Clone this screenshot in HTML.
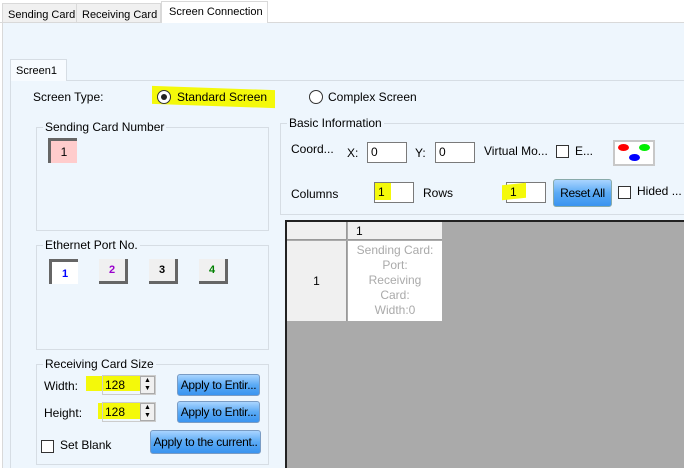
<!DOCTYPE html>
<html><head><meta charset="utf-8"><style>
*{box-sizing:border-box}
body{margin:0;width:684px;height:468px;overflow:hidden;background:#fff;font-family:"Liberation Sans",Arial,sans-serif;font-size:12px;color:#000;position:relative}
.a{position:absolute;white-space:nowrap}
.tab{position:absolute;border:1px solid #d9d9d9;background:#f0f0f0;font-size:11px;padding:5px 0 0 5px;white-space:nowrap;overflow:hidden}
.grp{position:absolute;border:1px solid #d6dde4}
.gl{position:absolute;top:-8px;left:6px;background:#eef6fd;padding:0 2px;font-size:12px;white-space:nowrap}
.in{position:absolute;background:#fff;border:1px solid #7a7a7a;font-size:12px;padding:2px 0 0 3px}
.btn{position:absolute;border:1px solid #7a9cc4;border-radius:3px;background:linear-gradient(#a9d4ff,#5aaaf5 50%,#3a94f0);font-size:12px;text-align:center;padding-top:3px;white-space:nowrap;overflow:hidden;letter-spacing:-0.3px}
.cb{position:absolute;width:13px;height:13px;border:1px solid #333;background:#fff}
.hl{position:absolute;background:#f4f90a}
.port{position:absolute;width:29px;height:25px;background:#f0f0f0;border-right:3px solid #666;border-bottom:3px solid #666;font-weight:bold;font-size:11px;text-align:center;padding-top:5px}
</style></head><body>
<div class="a" style="left:0;top:22px;width:684px;height:1px;background:#d9d9d9"></div>
<div class="tab" style="left:2px;top:3px;width:75px;height:20px">Sending Card</div>
<div class="tab" style="left:76px;top:3px;width:85px;height:20px">Receiving Card</div>
<div class="a" style="left:161px;top:1px;width:107px;height:23px;background:#fff;border:1px solid #d9d9d9;border-bottom:none;padding:4px 0 0 7px;font-size:11px;overflow:hidden">Screen Connection</div>
<div class="a" style="left:2px;top:23px;width:682px;height:445px;background:#eef6fd;border-left:1px solid #d9d9d9"></div>
<div class="a" style="left:10px;top:80px;width:674px;height:388px;border-left:1px solid #d6dde4;border-top:1px solid #d6dde4"></div>
<div class="a" style="left:10px;top:59px;width:57px;height:22px;background:#f7fbff;border:1px solid #d6dde4;border-bottom:none;padding:5px 0 0 5px;font-size:11px">Screen1</div>

<div class="a" style="left:33px;top:90px">Screen Type:</div>
<div class="hl" style="left:152px;top:88px;width:123px;height:18px;transform:skewY(2deg)"></div>
<div class="a" style="left:157px;top:90px;width:14px;height:14px;border-radius:50%;border:1px solid #333;background:#fff"><div class="a" style="left:3px;top:3px;width:6px;height:6px;border-radius:50%;background:#222"></div></div>
<div class="a" style="left:177px;top:90px">Standard Screen</div>
<div class="a" style="left:309px;top:90px;width:14px;height:14px;border-radius:50%;border:1px solid #333;background:#fff"></div>
<div class="a" style="left:328px;top:90px">Complex Screen</div>

<div class="grp" style="left:36px;top:127px;width:233px;height:104px"><div class="gl">Sending Card Number</div></div>
<div class="a" style="left:48px;top:138px;width:29px;height:25px;background:#ffcccc;border-left:3px solid #666;border-top:3px solid #666;text-align:center;padding-top:4px;font-size:12px">1</div>

<div class="grp" style="left:36px;top:245px;width:233px;height:105px"><div class="gl">Ethernet Port No.</div></div>
<div class="port" style="left:49px;top:259px;background:#fff;border:none;border-left:3px solid #666;border-top:3px solid #666;color:#0000ff;padding-top:6px">1</div>
<div class="port" style="left:99px;top:259px;color:#9900cc">2</div>
<div class="port" style="left:149px;top:259px">3</div>
<div class="port" style="left:199px;top:259px;color:#008000">4</div>

<div class="grp" style="left:36px;top:364px;width:233px;height:101px"><div class="gl">Receiving Card Size</div></div>
<div class="a" style="left:44px;top:379px">Width:</div>
<div class="hl" style="left:86px;top:376px;width:54px;height:15px"></div>
<div class="a" style="left:102px;top:375px;width:54px;height:20px;border:1px solid #ccc"></div>
<div class="a" style="left:104px;top:377px;width:36px;height:14px;background:#f4f90a;padding:1px 0 0 1px">128</div>
<div class="a" style="left:140px;top:376px;width:15px;height:18px;background:#f0f0f0;border:1px solid #aaa;font-size:7px;line-height:8px;text-align:center">▲<br>▼</div>
<div class="btn" style="left:177px;top:374px;width:83px;height:22px">Apply to Entir...</div>
<div class="a" style="left:44px;top:406px">Height:</div>
<div class="hl" style="left:98px;top:403px;width:42px;height:16px"></div>
<div class="a" style="left:102px;top:402px;width:54px;height:20px;border:1px solid #ccc"></div>
<div class="a" style="left:104px;top:404px;width:36px;height:14px;background:#f4f90a;padding:1px 0 0 1px">128</div>
<div class="a" style="left:140px;top:403px;width:15px;height:18px;background:#f0f0f0;border:1px solid #aaa;font-size:7px;line-height:8px;text-align:center">▲<br>▼</div>
<div class="btn" style="left:177px;top:401px;width:83px;height:22px">Apply to Entir...</div>
<div class="cb" style="left:41px;top:440px"></div>
<div class="a" style="left:60px;top:438px">Set Blank</div>
<div class="btn" style="left:150px;top:430px;width:111px;height:24px;padding-top:4px">Apply to the current..</div>

<div class="grp" style="left:280px;top:123px;width:410px;height:92px"><div class="gl">Basic Information</div></div>
<div class="a" style="left:291px;top:142px">Coord...</div>
<div class="a" style="left:347px;top:146px">X:</div>
<div class="in" style="left:367px;top:142px;width:40px;height:21px">0</div>
<div class="a" style="left:415px;top:146px">Y:</div>
<div class="in" style="left:435px;top:142px;width:40px;height:21px">0</div>
<div class="a" style="left:484px;top:144px">Virtual Mo...</div>
<div class="cb" style="left:556px;top:145px"></div>
<div class="a" style="left:575px;top:144px">E...</div>
<div class="a" style="left:613px;top:140px;width:42px;height:26px;background:#fff;border:2px solid #c8c8c8">
<div class="a" style="left:3px;top:2px;width:11px;height:7px;border-radius:50%;background:#f00"></div>
<div class="a" style="left:24px;top:2px;width:11px;height:7px;border-radius:50%;background:#0e0"></div>
<div class="a" style="left:14px;top:12px;width:11px;height:7px;border-radius:50%;background:#00f"></div></div>
<div class="a" style="left:291px;top:187px">Columns</div>
<div class="in" style="left:374px;top:182px;width:40px;height:21px"></div>
<div class="hl" style="left:375px;top:183px;width:16px;height:17px"></div>
<div class="a" style="left:378px;top:185px">1</div>
<div class="a" style="left:423px;top:186px">Rows</div>
<div class="in" style="left:506px;top:182px;width:40px;height:21px"></div>
<div class="hl" style="left:502px;top:184px;width:24px;height:15px;transform:skewY(-6deg)"></div>
<div class="a" style="left:510px;top:185px">1</div>
<div class="btn" style="left:553px;top:179px;width:59px;height:28px;padding-top:6px;border-color:#8aa">Reset All</div>
<div class="cb" style="left:618px;top:186px"></div>
<div class="a" style="left:637px;top:184px">Hided ...</div>
<div class="a" style="left:280px;top:214px;width:404px;height:1px;background:#d6dde4"></div>

<div class="a" style="left:285px;top:220px;width:399px;height:248px;background:#aaa;border-left:2px solid #222;border-top:2px solid #222"></div>
<div class="a" style="left:287px;top:222px;width:60px;height:18px;background:#f0f0f0;border-right:1px solid #999;border-bottom:1px solid #999"></div>
<div class="a" style="left:348px;top:222px;width:94px;height:18px;background:#f0f0f0;border-bottom:1px solid #999;padding:2px 0 0 8px">1</div>
<div class="a" style="left:287px;top:241px;width:60px;height:80px;background:#f0f0f0;border-right:1px solid #999;text-align:center;padding-top:33px">1</div>
<div class="a" style="left:348px;top:241px;width:94px;height:80px;background:#fff;color:#aaa;text-align:center;line-height:15px;padding-top:2px">Sending Card:<br>Port:<br>Receiving<br>Card:<br>Width:0</div>
</body></html>
